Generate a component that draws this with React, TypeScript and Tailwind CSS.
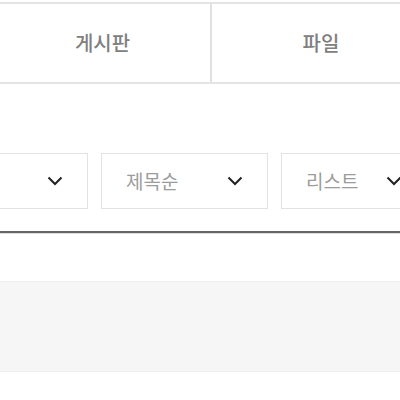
import React from "react";

function Chevron() {
  return (
    <svg width="16" height="10" viewBox="0 0 16 10" fill="none">
      <path d="M1.5 1.5 L8 8 L14.5 1.5" stroke="#222" strokeWidth="2" />
    </svg>
  );
}

function SelectBox({ label, w }: { label: string; w: string }) {
  return (
    <div className={`flex h-[56px] shrink-0 items-center justify-between border border-[#e2e2e2] bg-white pl-[24px] pr-[24px] ${w}`}>
      <span className="text-[19px] text-[#9c9c9c]">{label}</span>
      <Chevron />
    </div>
  );
}

export default function App() {
  return (
    <div
      className="h-[400px] w-[400px] overflow-hidden bg-white"
      style={{ fontFamily: '"Noto Sans CJK KR", "Noto Sans", sans-serif' }}
    >
      <div className="mt-[2px] flex h-[82px] -ml-[5px] border-t-2 border-b-2 border-[#e4e4e4]">
        <div className="flex w-[217px] shrink-0 items-center justify-center border-r-2 border-[#e0e0e0] text-[20px] font-medium text-[#808080]">
          게시판
        </div>
        <div className="flex w-[218px] shrink-0 items-center justify-center text-[20px] font-medium text-[#808080]">
          파일
        </div>
      </div>
      <div className="mt-[69px] flex gap-[13px] -ml-[79px]">
        <SelectBox label="" w="w-[167px]" />
        <SelectBox label="제목순" w="w-[167px]" />
        <SelectBox label="리스트" w="w-[146px]" />
      </div>
      <div className="mt-[22px] h-[2px] bg-[#666]" />
      <div className="h-[1px] bg-[#ddd]" />
      <div className="mt-[47px] h-[91px] border-y border-[#efefef] bg-[#f6f6f6]" />
    </div>
  );
}
